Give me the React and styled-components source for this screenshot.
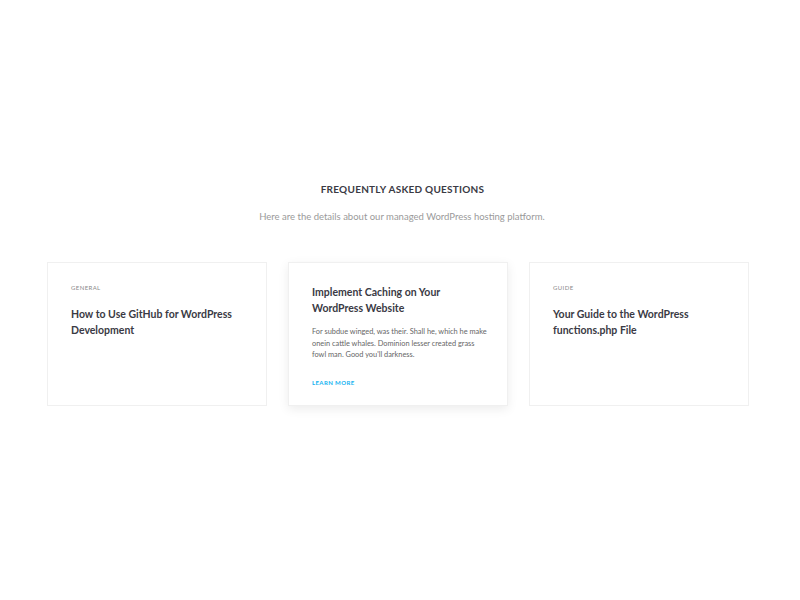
import React from "react";
import styled, { createGlobalStyle } from "styled-components";

const GlobalStyle = createGlobalStyle`
  body {
    margin: 0;
    background: #fff;
    font-family: Lato, "Open Sans", sans-serif;
  }
`;

const Page = styled.div`
  width: 800px;
  height: 600px;
  padding-top: 183px;
  box-sizing: border-box;
`;

const Heading = styled.h2`
  margin: 0;
  text-align: center;
  font-size: 10px;
  font-weight: 700;
  letter-spacing: 0.25px;
  color: #3a3a44;
  line-height: 13px;
  padding-left: 5px;
`;

const Subtitle = styled.p`
  margin: 15px 0 0;
  text-align: center;
  font-size: 9.5px;
  color: #9a9a9a;
  line-height: 12px;
  padding-left: 4px;
`;

const Cards = styled.div`
  display: grid;
  grid-template-columns: repeat(3, 220px);
  gap: 21px;
  margin: 39px 0 0 47px;
`;

const Card = styled.div`
  height: 144px;
  box-sizing: border-box;
  border: 1px solid #f0f0f0;
  background: #fff;
  padding: 21px 23px;
  box-shadow: ${(p) => (p.$featured ? "0 3px 10px rgba(0,0,0,0.08)" : "none")};
`;

const Label = styled.div`
  font-size: 6px;
  letter-spacing: 0.4px;
  color: #8a8a8a;
  line-height: 8px;
  margin-bottom: 14px;
`;

const Title = styled.h3`
  margin: 0;
  max-width: 172px;
  font-size: 10.5px;
  font-weight: 700;
  line-height: 16px;
  color: #3a3a44;
`;

const Body = styled.p`
  margin: 10px -4px 0 0;
  max-width: 177px;
  font-size: 7.4px;
  line-height: 11.5px;
  color: #666;
`;

const More = styled.a`
  display: block;
  margin-top: 18px;
  font-size: 6px;
  font-weight: 700;
  letter-spacing: 0.4px;
  color: #12b2f0;
  text-decoration: none;
`;

export default function App() {
  return (
    <>
      <GlobalStyle />
      <Page>
        <Heading>FREQUENTLY ASKED QUESTIONS</Heading>
        <Subtitle>
          Here are the details about our managed WordPress hosting platform.
        </Subtitle>
        <Cards>
          <Card>
            <Label>GENERAL</Label>
            <Title>How to Use GitHub for WordPress Development</Title>
          </Card>
          <Card $featured>
            <Title>Implement Caching on Your WordPress Website</Title>
            <Body>
              For subdue winged, was their. Shall he, which he make onein cattle
              whales. Dominion lesser created grass fowl man. Good you'll
              darkness.
            </Body>
            <More href="#">LEARN MORE</More>
          </Card>
          <Card>
            <Label>GUIDE</Label>
            <Title>Your Guide to the WordPress functions.php File</Title>
          </Card>
        </Cards>
      </Page>
    </>
  );
}
